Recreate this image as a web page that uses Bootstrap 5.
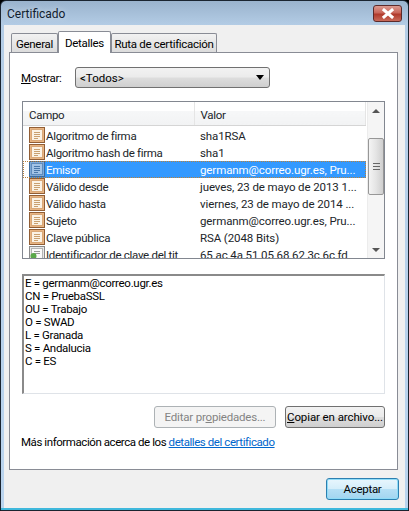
<!DOCTYPE html>
<html lang="es">
<head>
<meta charset="UTF-8">
<meta name="viewport" content="width=device-width, initial-scale=1">
<title>Certificado</title>
<link href="https://cdn.jsdelivr.net/npm/bootstrap@5.3.2/dist/css/bootstrap.min.css" rel="stylesheet">
<style>
  html, body { margin: 0; background: #000; }
  body { font-family: Roboto, "Open Sans", sans-serif; font-size: 11.5px; line-height: 16px; color: #000; letter-spacing: -.3px; }
  .wnd { width: 409px; height: 511px; border: 1px solid #1a2430; border-radius: 6px 6px 0 0; overflow: hidden;
    background: linear-gradient(180deg, #9ab3cd 0, #b4cde6 25px, #bad4ee 100%); display: flex; flex-direction: column; }
  .ttl { height: 24px; padding-left: 6px; font-size: 12px; letter-spacing: 0; color: #10202e; flex: none; }
  .ttl span { line-height: 27px; text-shadow: 0 0 6px rgba(255,255,255,.6); }
  .btn-x { width: 29px; height: 17px; margin: 4px 6px 0 0; border: 1px solid #5c2a2a; border-radius: 3px;
    background: linear-gradient(180deg, #dc9a90 0, #c9665a 45%, #b03a2c 55%, #c96a5a 100%); display: flex; align-items: center; justify-content: center; }
  .client { flex: 1; margin: 0 3px 2px; background: #f0f0f0; padding: 8px 7px 0 5px; display: flex; flex-direction: column; min-height: 0; }
  .win-tabs { border: 0; padding-left: 2px; height: 19px; flex: none; position: relative; z-index: 1; flex-wrap: nowrap; }
  .win-tabs .nav-link { font-size: 11.5px; line-height: 16px; height: 19px; padding: 2px 0 0; text-align: center; white-space: nowrap; color: #000; border: 1px solid #898c95; border-bottom: 0; border-radius: 2px 2px 0 0;
    background: linear-gradient(180deg, #f2f2f2, #dcdcdc); margin: 0; }
  .win-tabs .nav-link.t1 { width: 47px; }
  .win-tabs .nav-link.t2 { width: 53px; }
  .win-tabs .nav-link.t3 { width: 106px; }
  .win-tabs .nav-link.active { background: #fff; height: 22px; margin-top: -2px; padding-top: 3px; color: #000; border-color: #898c95; position: relative; z-index: 2; }
  .sheet { height: 418px; background: #fff; border: 1px solid #898c95; padding: 14px 12px 0; flex: none; }
  .u { text-decoration: underline; }
  .mostrar { height: 21px; margin-bottom: 13px; }
  .mostrar label { width: 54px; margin-left: -1px; }
  .combo { width: 195px; height: 21px; border: 1px solid #707070; border-radius: 3px; padding-left: 4px; letter-spacing: 0; background: linear-gradient(180deg, #f2f2f2 0, #ebebeb 48%, #dddddd 52%, #cfcfcf 100%); }
  .arrow { width: 0; height: 0; border: 4px solid transparent; border-top: 5px solid #000; border-bottom: 0; margin-right: 5px; }
  .lst { height: 158px; border: 1px solid #828790; overflow: hidden; }
  .lst-main { flex: 1; min-width: 0; overflow: hidden; }
  .lst-table { width: 343px; table-layout: fixed; margin: 0; border-collapse: collapse; }
  .lst-table th, .lst-table td { padding: 1px 0 0 6px; font-weight: 400; border: 0; height: 17px; line-height: 16px; white-space: nowrap; overflow: hidden; background: transparent; color: inherit; box-shadow: none; vertical-align: top; }
  .lst-table th { height: 23px; padding-top: 4px; vertical-align: middle; border-right: 1px solid #e5e5e5; border-bottom: 1px solid #d5d5d5; background: linear-gradient(180deg, #fff 0, #fff 40%, #f6f7f8 41%, #f2f3f4 100%); }
  .lst-table .c1 { width: 171px; }
  .lst-table .cell { display: flex; align-items: flex-start; gap: 1px; }
  .lst-table .cell svg { margin-top: -1px; flex: none; }
  .lst-table td + td { letter-spacing: -.1px; }
  .lst-table tr.on td { background: #3399ff; color: #fff; }
  .lst-table tr.on td:first-child { background: linear-gradient(90deg, #fff 6px, #3399ff 6px); }
  .lst-table tr.on { outline: 1px dotted #b9813c; outline-offset: -1px; }
  .lst-table .gap td { height: 2px; line-height: 2px; padding: 0; }
  .sbar { width: 17px; background: #f5f5f5; flex: none; border-left: 1px solid #ececec; }
  .sarrow { height: 17px; }
  .up { width: 0; height: 0; border: 4px solid transparent; border-bottom: 4px solid #555; border-top: 0; }
  .dn { width: 0; height: 0; border: 4px solid transparent; border-top: 4px solid #555; border-bottom: 0; }
  .thumb { height: 57px; margin-top: 19px; border: 1px solid #979797; border-radius: 2px; background: linear-gradient(90deg, #f4f4f4, #e4e4e4 50%, #cfcfcf); }
  .grip { width: 7px; height: 7px; border-top: 1px solid #666; border-bottom: 1px solid #666; position: relative; }
  .grip::after { content: ""; position: absolute; left: 0; right: 0; top: 2px; height: 1px; background: #666; }
  .detalle { height: 120px; margin-top: 15px; border: 1px solid #dfe3e8; border-top: 2px solid #8a8a8a; border-left: 2px solid #8a8a8a; padding: 1px 0 0 1px; line-height: 13px; }
  .detalle div { height: 13px; }
  .btn-win { height: 22px; font-size: 11.5px; line-height: 16px; padding: 0; border: 1px solid #707070; border-radius: 3px; color: #000; letter-spacing: -.3px; white-space: nowrap; background: linear-gradient(180deg, #f2f2f2 0, #ebebeb 48%, #dddddd 52%, #cfcfcf 100%); }
  .btn-win:disabled { color: #838383; border-color: #adb2b5; background: #f4f4f4; opacity: 1; }
  .b-edit { width: 122px; letter-spacing: -.2px; }
  .b-copy { width: 100px; letter-spacing: -.1px; }
  .acciones { margin-top: 12px; gap: 9px; }
  .enlace { margin: 6px 0 0 -1px; height: 16px; letter-spacing: -.43px; }
  .enlace a { color: #0066cc; }
  .pie { flex: 1; padding: 8px 0 0; margin-right: -1px; }
  .btn-ok { width: 73px; border: 1px solid #2c7fb0; border-radius: 3px; box-shadow: inset 0 0 0 1px #8fdcf8; background: linear-gradient(180deg, #e8f6fd 0, #d5eefa 48%, #b5dff5 52%, #a2d5f0 100%); }
  .borde-cian { height: 2px; background: #3fb8dc; flex: none; margin-top: -2px; }
</style>
</head>
<body>
<svg width="0" height="0" class="d-block position-absolute">
  <symbol id="ic-campo" viewBox="0 0 16 16">
    <rect x=".5" y=".5" width="15" height="15" fill="#e9b583" stroke="#915e35"/>
    <rect x="2.5" y="2.5" width="11" height="11" fill="#fbf3e6" stroke="#d9a878"/>
    <path d="M5 5.5h6M5 7.5h6M5 9.5h6M5 11.5h4" stroke="#c9a070" fill="none"/>
  </symbol>
  <symbol id="ic-campo-on" viewBox="0 0 16 16">
    <rect x=".5" y=".5" width="15" height="15" fill="#7fa9d6" stroke="#3d6a9c"/>
    <rect x="2.5" y="2.5" width="11" height="11" fill="#a4c4e6" stroke="#5f8cbd"/>
    <path d="M5 5.5h6M5 7.5h6M5 9.5h6M5 11.5h4" stroke="#4a78aa" fill="none"/>
  </symbol>
  <symbol id="ic-clave" viewBox="0 0 16 16">
    <rect x=".5" y=".5" width="15" height="15" fill="#e8e8e8" stroke="#8b8b8b"/>
    <rect x="2.5" y="2.5" width="11" height="11" fill="#fafafa" stroke="#b5b5b5"/>
    <path d="M5 5.5h6M5 7.5h6" stroke="#999" fill="none"/>
    <circle cx="4.5" cy="10" r="3" fill="#5aa84a"/>
  </symbol>
</svg>

<div class="wnd">
  <div class="ttl d-flex justify-content-between align-items-start">
    <span>Certificado</span>
    <div class="btn-x">
      <svg width="16" height="11" viewBox="0 0 16 11"><path d="M4 2 12 9M12 2 4 9" stroke="#fff" stroke-width="3" stroke-linecap="square" fill="none"/></svg>
    </div>
  </div>

  <div class="client">
    <ul class="nav nav-tabs win-tabs">
      <li class="nav-item"><a class="nav-link t1" href="#">General</a></li>
      <li class="nav-item"><a class="nav-link t2 active" href="#">Detalles</a></li>
      <li class="nav-item"><a class="nav-link t3" href="#">Ruta de certificación</a></li>
    </ul>

    <div class="sheet">
      <div class="mostrar d-flex align-items-center">
        <label><span class="u">M</span>ostrar:</label>
        <div class="combo d-flex align-items-center justify-content-between">
          <span>&lt;Todos&gt;</span><span class="arrow"></span>
        </div>
      </div>

      <div class="lst d-flex">
        <div class="lst-main">
          <table class="table lst-table">
            <thead>
              <tr><th class="c1">Campo</th><th>Valor</th></tr>
            </thead>
            <tbody>
              <tr class="gap"><td></td><td></td></tr>
              <tr><td><div class="cell"><svg width="16" height="16"><use href="#ic-campo"/></svg>Algoritmo de firma</div></td><td>sha1RSA</td></tr>
              <tr><td><div class="cell"><svg width="16" height="16"><use href="#ic-campo"/></svg>Algoritmo hash de firma</div></td><td>sha1</td></tr>
              <tr class="on"><td><div class="cell"><svg width="16" height="16"><use href="#ic-campo-on"/></svg>Emisor</div></td><td>germanm@correo.ugr.es, Pru...</td></tr>
              <tr><td><div class="cell"><svg width="16" height="16"><use href="#ic-campo"/></svg>Válido desde</div></td><td>jueves, 23 de mayo de 2013 1...</td></tr>
              <tr><td><div class="cell"><svg width="16" height="16"><use href="#ic-campo"/></svg>Válido hasta</div></td><td>viernes, 23 de mayo de 2014 ...</td></tr>
              <tr><td><div class="cell"><svg width="16" height="16"><use href="#ic-campo"/></svg>Sujeto</div></td><td>germanm@correo.ugr.es, Pru...</td></tr>
              <tr><td><div class="cell"><svg width="16" height="16"><use href="#ic-campo"/></svg>Clave pública</div></td><td>RSA (2048 Bits)</td></tr>
              <tr><td><div class="cell"><svg width="16" height="16"><use href="#ic-clave"/></svg>Identificador de clave del tit</div></td><td>65 ac 4a 51 05 68 62 3c 6c fd</td></tr>
            </tbody>
          </table>
        </div>
        <div class="sbar d-flex flex-column">
          <div class="sarrow d-flex align-items-center justify-content-center"><span class="up"></span></div>
          <div class="thumb d-flex align-items-center justify-content-center"><span class="grip"></span></div>
          <div class="flex-grow-1"></div>
          <div class="sarrow d-flex align-items-center justify-content-center"><span class="dn"></span></div>
        </div>
      </div>

      <div class="detalle">
        <div>E = germanm@correo.ugr.es</div>
        <div>CN = PruebaSSL</div>
        <div>OU = Trabajo</div>
        <div>O = SWAD</div>
        <div>L = Granada</div>
        <div>S = Andalucia</div>
        <div>C = ES</div>
      </div>

      <div class="acciones d-flex justify-content-end">
        <button class="btn btn-win b-edit" disabled>Editar pr<span class="u">o</span>piedades...</button>
        <button class="btn btn-win b-copy"><span class="u">C</span>opiar en archivo...</button>
      </div>

      <div class="enlace">Más información acerca de los <a href="#">detalles del certificado</a></div>
    </div>

    <div class="pie d-flex justify-content-end">
      <button class="btn btn-win btn-ok">Aceptar</button>
    </div>
  </div>
  <div class="borde-cian"></div>
</div>

<script src="https://cdn.jsdelivr.net/npm/bootstrap@5.3.2/dist/js/bootstrap.bundle.min.js"></script>
</body>
</html>
